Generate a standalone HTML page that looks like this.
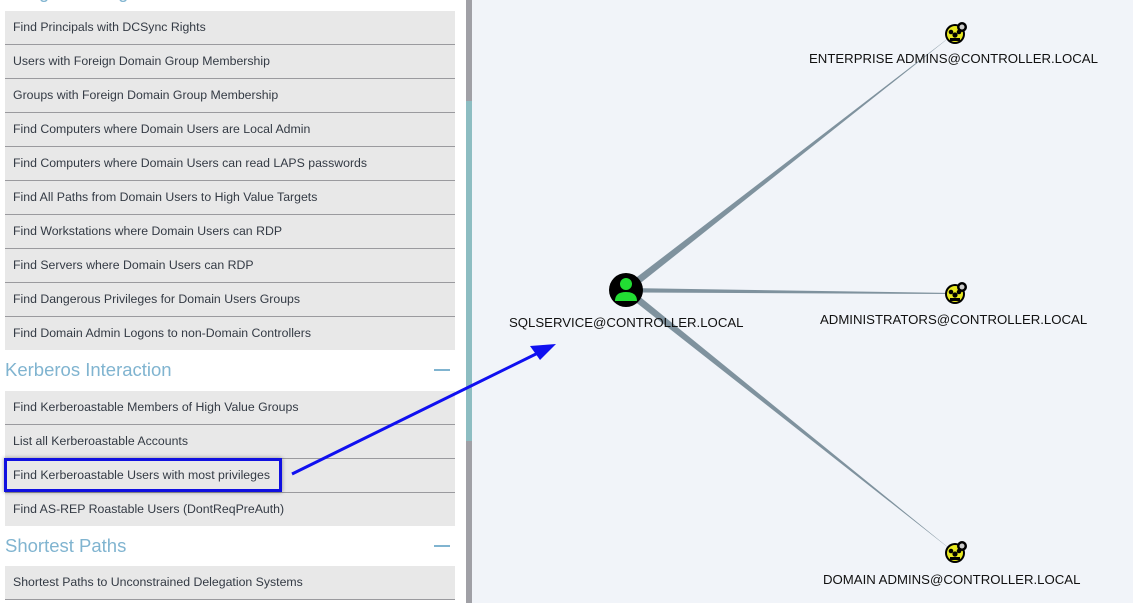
<!DOCTYPE html>
<html><head><meta charset="utf-8"><style>
*{margin:0;padding:0;box-sizing:border-box}
body{width:1133px;height:603px;overflow:hidden;background:#fff;font-family:"Liberation Sans",sans-serif;position:relative}
.r{position:absolute;left:5px;width:450px;height:34px;background:#e8e8e8;border-bottom:1px solid #9a9a9e;font-size:12.3px;color:#333a44;padding-left:8px;line-height:33px}
.nb{border-bottom:none;height:33px}
.h{position:absolute;left:5px;font-size:18.5px;color:#80b4d0;}
.m{position:absolute;left:434px;width:16px;height:2px;background:#80b4d0}
.lbl{position:absolute;font-size:13.2px;color:#111;white-space:nowrap}
</style></head><body>
<div class="h" style="top:-19px;">Dangerous Rights</div>
<div class="r" style="top:11px">Find Principals with DCSync Rights</div>
<div class="r" style="top:45px">Users with Foreign Domain Group Membership</div>
<div class="r" style="top:79px">Groups with Foreign Domain Group Membership</div>
<div class="r" style="top:113px">Find Computers where Domain Users are Local Admin</div>
<div class="r" style="top:147px">Find Computers where Domain Users can read LAPS passwords</div>
<div class="r" style="top:181px">Find All Paths from Domain Users to High Value Targets</div>
<div class="r" style="top:215px">Find Workstations where Domain Users can RDP</div>
<div class="r" style="top:249px">Find Servers where Domain Users can RDP</div>
<div class="r" style="top:283px">Find Dangerous Privileges for Domain Users Groups</div>
<div class="r nb" style="top:317px">Find Domain Admin Logons to non-Domain Controllers</div>
<div class="h" style="top:359px">Kerberos Interaction</div><div class="m" style="top:369px"></div>
<div class="r" style="top:391px">Find Kerberoastable Members of High Value Groups</div>
<div class="r" style="top:425px">List all Kerberoastable Accounts</div>
<div class="r" style="top:459px">Find Kerberoastable Users with most privileges</div>
<div class="r nb" style="top:493px">Find AS-REP Roastable Users (DontReqPreAuth)</div>
<div class="h" style="top:535px">Shortest Paths</div><div class="m" style="top:545px"></div>
<div class="r" style="top:566px">Shortest Paths to Unconstrained Delegation Systems</div>
<div style="position:absolute;left:4px;top:458px;width:278px;height:34px;border:3px solid #1010e0;box-shadow:0 0 4px rgba(0,0,0,.4)"></div>
<div style="position:absolute;left:466px;top:0;width:6px;height:603px;background:#a0a0a6"></div>
<div style="position:absolute;left:466px;top:101px;width:6px;height:340px;background:#8dbdc2"></div>
<div style="position:absolute;left:472px;top:0;width:661px;height:603px;background:#f1f4f9"></div>
<svg style="position:absolute;left:0;top:0" width="1133" height="603">
<defs><g id="g"><circle cx="0" cy="0" r="10" fill="#000"/><circle cx="0" cy="0" r="8" fill="#e8e820"/><circle cx="-4" cy="-2" r="2.3" fill="#000"/><circle cx="4" cy="-2" r="2.3" fill="#000"/><circle cx="0" cy="1" r="2.6" fill="#000"/><rect x="-5" y="4" width="10" height="3" fill="#000"/><circle cx="7" cy="-7" r="5" fill="#000"/><circle cx="7" cy="-7" r="2.5" fill="#ccc"/></g></defs>
<polygon points="624,287 628,293 955,33" fill="#7f929e"/>
<polygon points="626,288 626,292.5 955,294 955,293" fill="#7f929e"/>
<polygon points="628,287 624,293 955,553" fill="#7f929e"/>
<line x1="292" y1="474" x2="540" y2="352" stroke="#1010f0" stroke-width="3"/>
<polygon points="556,344 530,346 540,360" fill="#1010f0"/>
<circle cx="626" cy="290" r="17" fill="#000"/>
<circle cx="626" cy="284" r="6" fill="#22dd33"/>
<path d="M615,301 Q615,292 626,292 Q637,292 637,301 Z" fill="#22dd33"/>
<use href="#g" x="955" y="34"/>
<use href="#g" x="955" y="294"/>
<use href="#g" x="955" y="553"/>
</svg>
<div class="lbl" style="left:509px;top:315px">SQLSERVICE@CONTROLLER.LOCAL</div>
<div class="lbl" style="left:809px;top:51px">ENTERPRISE ADMINS@CONTROLLER.LOCAL</div>
<div class="lbl" style="left:820px;top:312px">ADMINISTRATORS@CONTROLLER.LOCAL</div>
<div class="lbl" style="left:823px;top:572px">DOMAIN ADMINS@CONTROLLER.LOCAL</div>
</body></html>
